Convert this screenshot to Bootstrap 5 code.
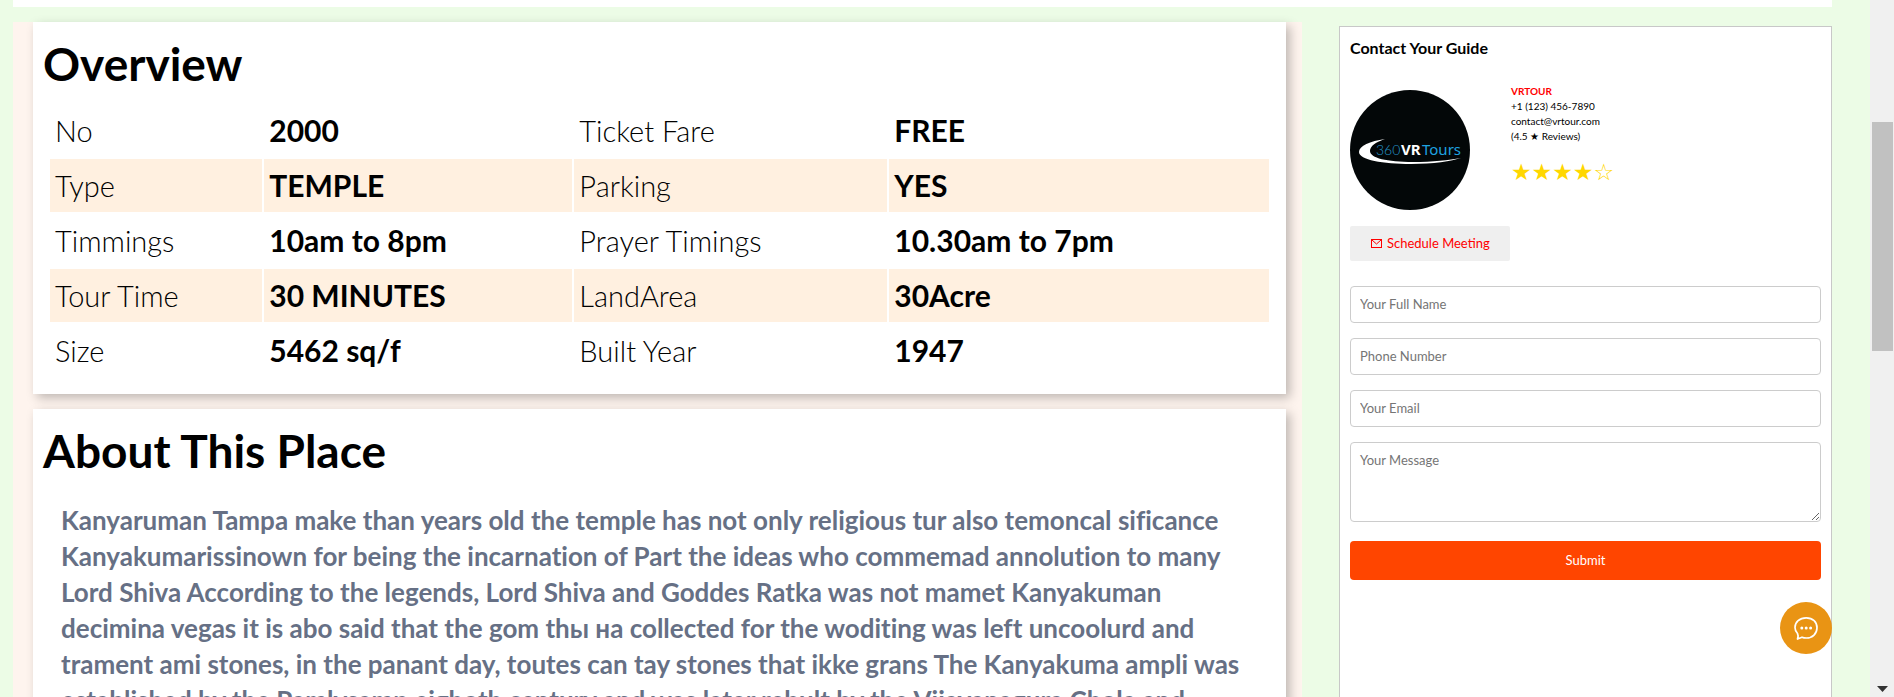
<!DOCTYPE html>
<html lang="en">
<head>
<meta charset="utf-8">
<meta name="viewport" content="width=device-width, initial-scale=1">
<title>360 VR Tours</title>
<link href="https://cdn.jsdelivr.net/npm/bootstrap@5.3.0/dist/css/bootstrap.min.css" rel="stylesheet">
<style>
  body { font-family: Lato, "Noto Sans", sans-serif; font-variant-ligatures: none; background: #ecfce6; color: #000; }
  .page-main { padding: 0 38px 0 13px; }
  .top-strip { height: 7px; background: #fff; margin-bottom: 15px; }
  .tour-layout { display: grid; grid-template-columns: 1289fr 493fr; column-gap: 37px; }
  .tour-info { background: #fef4ee; padding: 0 16px 0 20px; }
  .panel { background: #fff; box-shadow: 4px 4px 10px rgba(0, 0, 0, .25); }
  .panel + .panel { margin-top: 15px; }
  .panel h2 { font-size: 46px; line-height: 54px; font-weight: 700; margin: 0; padding: 15px 10px 11px; }
  .facts-wrap { padding: 0 15px 15px; }
  .facts { width: 100%; table-layout: fixed; border-collapse: separate; border-spacing: 2px; font-size: 29px; line-height: 43px; }
  .facts th, .facts td { padding: 5px; white-space: nowrap; }
  .facts th { font-weight: 300; }
  .facts td { font-weight: 700; font-size: 30px; }
  .facts tr:nth-child(even) > * { background: #fff0e0; }
  .w-a { width: 17.5%; } .w-b { width: 25.4%; } .w-c { width: 25.8%; }
  .story { color: #667085; font-size: 26px; line-height: 36px; font-weight: 700; padding: 13px 28px; margin: 0; white-space: nowrap; }
  .guide { background: #fff; border: 1px solid #c8c8c8; margin-top: 4px; padding: 9px 10px 10px; }
  .guide h3 { font-size: 16px; line-height: 24px; font-weight: 700; margin: 0 0 30px; }
  .guide-logo { width: 120px; height: 120px; flex: none; }
  .guide-text { font-size: 10px; line-height: 15px; margin-left: 41px; margin-top: -6px; }
  .guide-name { color: #f00; font-weight: 700; }
  .guide-text a { color: #000; text-decoration: none; }
  .rating { color: gold; font: 23px/30px "DejaVu Sans", sans-serif; margin-top: 13px; }
  .meet-btn { background: #efefef; color: #f00; border: 0; border-radius: 2px; font-size: 13px; line-height: 19px; padding: 8px 20px; margin: 16px 0 25px; font-weight: 400; }
  .guide .form-control { border: 1px solid #ccc; border-radius: 4px; font-size: 13px; line-height: 19px; padding: 8px 9px; margin-bottom: 15px; min-height: 37px; }
  .guide .form-control::placeholder { color: #757575; }
  .guide textarea.form-control { height: 80px; margin-bottom: 19px; }
  .send-btn { background: #ff4500; color: #fff; border: 0; border-radius: 4px; font-size: 13px; line-height: 19px; padding: 10px; }
  .chat-btn { right: 62px; bottom: 43px; width: 52px; height: 52px; background: #e99414; border: 0; }
  .side-scroll { width: 24px; flex: none; background: #f0f0f0; padding: 122px 1px 5px 2px; }
  .side-thumb { height: 229px; background: #c1c1c1; }
</style>
</head>
<body>
<div class="d-flex vh-100 overflow-hidden">
  <main class="page-main flex-grow-1 overflow-hidden">
    <div class="top-strip"></div>
    <div class="tour-layout">
      <div class="tour-info">
        <section class="panel">
          <h2>Overview</h2>
          <div class="facts-wrap">
            <table class="facts">
              <colgroup><col class="w-a"><col class="w-b"><col class="w-c"><col></colgroup>
              <tbody>
                <tr><th scope="row">No</th><td>2000</td><th scope="row">Ticket Fare</th><td>FREE</td></tr>
                <tr><th scope="row">Type</th><td>TEMPLE</td><th scope="row">Parking</th><td>YES</td></tr>
                <tr><th scope="row">Timmings</th><td>10am to 8pm</td><th scope="row">Prayer Timings</th><td>10.30am to 7pm</td></tr>
                <tr><th scope="row">Tour Time</th><td>30 MINUTES</td><th scope="row">LandArea</th><td>30Acre</td></tr>
                <tr><th scope="row">Size</th><td>5462 sq/f</td><th scope="row">Built Year</th><td>1947</td></tr>
              </tbody>
            </table>
          </div>
        </section>
        <section class="panel">
          <h2>About This Place</h2>
          <p class="story">Kanyaruman Tampa make than years old the temple has not only religious tur also temoncal sificance<br>
          Kanyakumarissinown for being the incarnation of Part the ideas who commemad annolution to many<br>
          Lord Shiva According to the legends, Lord Shiva and Goddes Ratka was not mamet Kanyakuman<br>
          decimina vegas it is abo said that the gom thы на collected for the woditing was left uncoolurd and<br>
          trament ami stones, in the panant day, toutes can tay stones that ikke grans The Kanyakuma ampli was<br>
          established by the Pamlysamp eighoth century and was later rebult by the Vijayanagura Chola and</p>
        </section>
      </div>
      <aside class="guide">
        <h3>Contact Your Guide</h3>
        <div class="d-flex align-items-start">
          <svg class="guide-logo" viewBox="0 0 120 120" role="img" aria-label="360VRTours">
            <circle cx="60" cy="60" r="60" fill="#030708"/>
            <path d="M35 49C20 51 9 56 9 62c0 8 24 12 52 12 22 0 41-3 50-6-12 2-28 4-48 4-26 0-43-4-43-11 0-5 6-9 15-12z" fill="#fff"/>
            <g font-family="'Noto Sans', sans-serif" font-size="15">
              <text x="26" y="65" fill="#2394c8" font-family="Lato, sans-serif" font-size="14" font-weight="300">360</text>
              <text x="51" y="65" fill="#fff" font-weight="700">VR</text>
              <text x="72" y="65" fill="#1fa3e0">Tours</text>
            </g>
          </svg>
          <div class="guide-text">
            <div class="guide-name">VRTOUR</div>
            <div>+1 (123) 456-7890</div>
            <div><a href="mailto:contact@vrtour.com">contact@vrtour.com</a></div>
            <div>(4.5 ★ Reviews)</div>
            <div class="rating">★★★★☆</div>
          </div>
        </div>
        <button type="button" class="btn meet-btn d-inline-flex align-items-center gap-1">
          <svg width="13" height="11" viewBox="0 0 13 11" fill="none" stroke="currentColor" aria-hidden="true"><rect x="1.5" y="1.5" width="10" height="8"/><path d="M2 2l4.500 4L11 2"/></svg>
          Schedule Meeting
        </button>
        <form>
          <input class="form-control" type="text" placeholder="Your Full Name" aria-label="Your Full Name">
          <input class="form-control" type="tel" placeholder="Phone Number" aria-label="Phone Number">
          <input class="form-control" type="email" placeholder="Your Email" aria-label="Your Email">
          <textarea class="form-control" placeholder="Your Message" aria-label="Your Message"></textarea>
          <button type="submit" class="btn send-btn w-100">Submit</button>
        </form>
      </aside>
    </div>
  </main>
  <div class="side-scroll d-flex flex-column justify-content-between align-items-stretch" aria-hidden="true">
    <div class="side-thumb"></div>
    <svg class="align-self-center" width="11" height="6" viewBox="0 0 11 6"><path d="M0 0h11L5.500 6z" fill="#333"/></svg>
  </div>
</div>
<button type="button" class="chat-btn position-fixed rounded-circle d-flex align-items-center justify-content-center p-0" aria-label="Open chat">
  <svg width="26" height="26" viewBox="0 0 26 26" fill="none" stroke="#fff" stroke-width="1.700" stroke-linejoin="round" aria-hidden="true"><path d="M4.500 18.500C2.500 16.500 2 14.500 2 12.500 2 7 6.500 2.800 13.200 2.800S24 7 24 12.800 19.500 23 13.500 23c-1.700 0-3.200-.2-4.500-.8L4.500 24c1-2 1-3.500 0-5.500z"/><g fill="#fff" stroke="none"><circle cx="8.800" cy="13" r="1.500"/><circle cx="13.200" cy="13" r="1.500"/><circle cx="17.600" cy="13" r="1.500"/></g></svg>
</button>
<script src="https://cdn.jsdelivr.net/npm/bootstrap@5.3.0/dist/js/bootstrap.bundle.min.js"></script>
</body>
</html>
